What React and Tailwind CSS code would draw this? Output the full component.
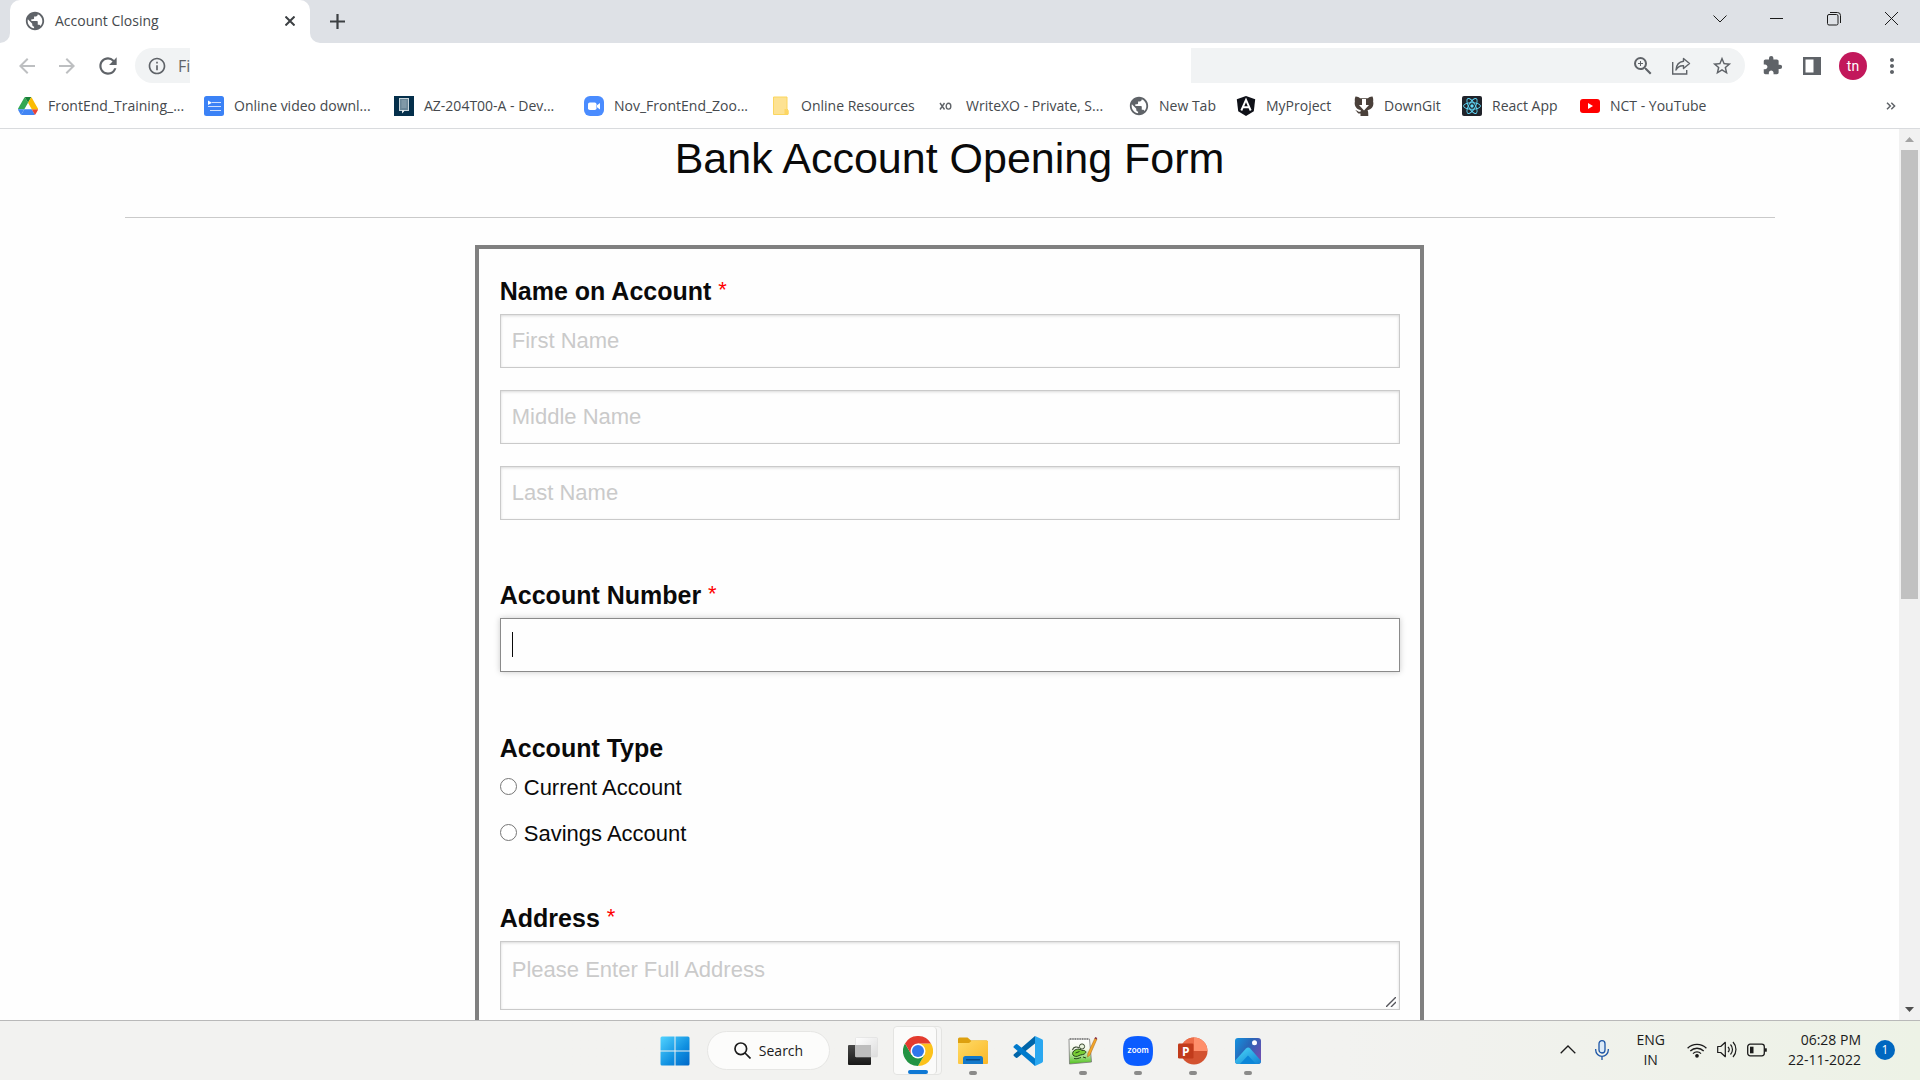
import React from "react";
import {
  MdPublic,
  MdArrowBack,
  MdArrowForward,
  MdRefresh,
  MdOutlineInfo,
  MdZoomIn,
  MdStarBorder,
  MdExtension,
  MdMoreVert,
} from "react-icons/md";

/* ---------- Bookmark icons ---------- */

const DriveIcon = () => (
  <svg width="20" height="18" viewBox="0 0 87 78" aria-hidden="true">
    <path d="M43.7 25L29.9 1.2c-1.3.8-2.5 1.9-3.3 3.300L1.200 48.500A9 9 0 0 0 0 53h27.500z" fill="#34a853" />
    <path d="M43.700 25L57.400 1.200C56.100.4 54.500 0 52.900 0H34.400c-1.600 0-3.200.4-4.500 1.200z" fill="#188038" />
    <path d="M59.800 53H27.500L13.700 76.800c1.400.8 2.900 1.200 4.500 1.200h50.900c1.600 0 3.200-.4 4.500-1.200z" fill="#4285f4" />
    <path d="M6.600 66.900l3.900 6.600c.8 1.400 2 2.500 3.300 3.300L27.500 53H0c0 1.600.4 3.100 1.200 4.500z" fill="#4285f4" />
    <path d="M73.500 76.800c1.300-.8 2.500-1.900 3.300-3.300l9.300-16c.8-1.400 1.200-2.900 1.200-4.500H59.800l5.900 11.500z" fill="#ea4335" />
    <path d="M73.400 26.500l-12.700-22c-.8-1.400-2-2.500-3.300-3.300L43.700 25l16.100 28h27.400c0-1.600-.4-3.100-1.200-4.500z" fill="#fbbc04" />
  </svg>
);

const VideoListIcon = () => (
  <svg width="20" height="20" viewBox="0 0 20 20" aria-hidden="true">
    <rect width="20" height="20" rx="2.5" fill="#3b82f6" />
    <path d="M4 4.500l4 2.300-4 2.300z" fill="#fff" />
    <path d="M8 6.500h9M4 10.500h13M6 14.500h11" stroke="#cfe0fd" strokeWidth="1.2" />
  </svg>
);

const CourseIcon = () => (
  <svg width="20" height="20" viewBox="0 0 20 20" aria-hidden="true">
    <rect width="20" height="20" fill="#042f4b" />
    <rect x="5.5" y="2.5" width="9" height="12" fill="#6b8798" stroke="#c9d5db" strokeWidth="1" />
    <path d="M7.500 5h5M7.500 7h5M7.500 9h5M7.500 11h5" stroke="#a9bac4" strokeWidth=".7" />
    <path d="M8 14v3.500l2-2 .5-1.500z" fill="#e3eaee" />
  </svg>
);

const ZoomCamIcon = () => (
  <svg width="20" height="20" viewBox="0 0 20 20" aria-hidden="true">
    <rect width="20" height="20" rx="6" fill="#4a8cff" />
    <rect x="4" y="6.5" width="8.5" height="7.5" rx="1.8" fill="#fff" />
    <path d="M13 9.200l3-2.200v6.500l-3-2.200z" fill="#fff" />
  </svg>
);

const NoteIcon = () => (
  <svg width="20" height="20" viewBox="0 0 20 20" aria-hidden="true">
    <path d="M2.500 1h13.500v12l1 1v4.500H2.500z" fill="#fde293" stroke="#fbd65f" />
    <path d="M13.500 18v-5h2l2 2v3z" fill="#fdd663" />
  </svg>
);

const XoIcon = () => (
  <svg width="20" height="20" viewBox="0 0 20 20" aria-hidden="true">
    <path d="M4 7l4.500 6.500M8.500 7L4 13.500" stroke="#5f6368" strokeWidth="1.4" />
    <ellipse cx="12.5" cy="10.2" rx="2.3" ry="2.9" fill="none" stroke="#5f6368" strokeWidth="1.4" />
  </svg>
);

const GlobeIcon = () => <MdPublic size={22} className="shrink-0 text-[#5f6368]" aria-hidden="true" />;

const AngularIcon = () => (
  <svg width="20" height="20" viewBox="0 0 20 20" aria-hidden="true">
    <path d="M10 0l9.200 3.300-1.400 12L10 20l-7.800-4.700-1.400-12z" fill="#0f1118" />
    <path d="M5.300 14.500L10 3.800l4.700 10.700M7 11.300h6" fill="none" stroke="#fff" strokeWidth="1.9" />
  </svg>
);

const DownGitIcon = () => (
  <svg width="20" height="20" viewBox="0 0 20 20" aria-hidden="true">
    <path d="M1.500.500C3 .3 5 1.200 6 2.200h8c1-1 3-1.900 4.500-1.700.9 2 .8 4 .6 5 1 3.500-.6 7.800-5.600 8.800.6.800.8 2 .8 5.700H6.500v-2.500c-2.500.300-3.300-1-4-2.300l-1.200-1c1.700-.3 2.500 1.800 5.200 1.600 0-.7.200-1.200.5-1.500C1.600 13.200 0 9 .9 5.500c-.2-1-.3-3 .6-5z" fill="#4a403a" />
    <path d="M8 3h4v6h3l-5 5.500L5 9h3z" fill="#fff" />
  </svg>
);

const ReactIcon = () => (
  <svg width="20" height="20" viewBox="0 0 20 20" aria-hidden="true">
    <rect width="20" height="20" rx="2" fill="#20232a" />
    <g fill="none" stroke="#61dafb" strokeWidth=".9">
      <ellipse cx="10" cy="10" rx="8.5" ry="3.3" />
      <ellipse cx="10" cy="10" rx="8.5" ry="3.3" transform="rotate(60 10 10)" />
      <ellipse cx="10" cy="10" rx="8.5" ry="3.3" transform="rotate(120 10 10)" />
    </g>
    <circle cx="10" cy="10" r="1.7" fill="#61dafb" />
  </svg>
);

const YouTubeIcon = () => (
  <svg width="20" height="20" viewBox="0 0 20 20" aria-hidden="true">
    <rect y="3" width="20" height="14" rx="3" fill="#f00" />
    <path d="M8 7l5 3-5 3z" fill="#fff" />
  </svg>
);

const bookmarks = [
  { label: "FrontEnd_Training_...", icon: DriveIcon, width: "w-[186px]" },
  { label: "Online video downl...", icon: VideoListIcon, width: "w-[190px]" },
  { label: "AZ-204T00-A - Dev...", icon: CourseIcon, width: "w-[190px]" },
  { label: "Nov_FrontEnd_Zoo...", icon: ZoomCamIcon, width: "w-[187px]" },
  { label: "Online Resources", icon: NoteIcon, width: "w-[165px]" },
  { label: "WriteXO - Private, S...", icon: XoIcon, width: "w-[193px]" },
  { label: "New Tab", icon: GlobeIcon, width: "w-[107px]" },
  { label: "MyProject", icon: AngularIcon, width: "w-[118px]" },
  { label: "DownGit", icon: DownGitIcon, width: "w-[108px]" },
  { label: "React App", icon: ReactIcon, width: "w-[118px]" },
  { label: "NCT - YouTube", icon: YouTubeIcon, width: "w-[140px]" },
];

/* ---------- Browser chrome ---------- */

function TabStrip() {
  return (
    <div className="flex h-[43px] shrink-0 items-stretch bg-[#dee1e6]">
      <div className="w-[10px] bg-white">
        <div className="h-full rounded-br-[10px] bg-[#dee1e6]" />
      </div>
      <div className="flex w-[300px] items-center rounded-t-[10px] bg-white pr-[15px] pb-[2px] pl-[14px]">
        <MdPublic size={22} className="text-[#5f6368]" aria-hidden="true" />
        <span className="ml-[9px] flex-1 text-[#45494d]">Account Closing</span>
        <button type="button" aria-label="Close tab" className="text-[#3c4043]">
          <svg width="10" height="10" viewBox="0 0 10 10"><path d="M.5.5l9 9M9.500.5l-9 9" stroke="currentColor" strokeWidth="2" /></svg>
        </button>
      </div>
      <div className="w-[10px] bg-white">
        <div className="h-full rounded-bl-[10px] bg-[#dee1e6]" />
      </div>
      <button type="button" aria-label="New tab" className="ml-[10px] text-[#3c4043]">
        <svg width="15" height="15" viewBox="0 0 15 15"><path d="M7.500 0v15M0 7.500h15" stroke="currentColor" strokeWidth="2.2" /></svg>
      </button>
      <div className="ml-auto flex items-center pb-[6px] text-[#1b1b1b]">
        <button type="button" aria-label="Search tabs" className="flex w-[57px] justify-center">
          <svg width="14" height="8" viewBox="0 0 14 8"><path d="M.5 .5l6.500 6.500 6.500-6.500" fill="none" stroke="currentColor" /></svg>
        </button>
        <button type="button" aria-label="Minimize" className="flex w-[57px] justify-center">
          <svg width="13" height="13" viewBox="0 0 13 13"><path d="M0 6.500h13" stroke="currentColor" /></svg>
        </button>
        <button type="button" aria-label="Restore" className="flex w-[57px] justify-center">
          <svg width="14" height="14" viewBox="0 0 14 14" fill="none" stroke="currentColor">
            <rect x=".5" y="2.5" width="10.5" height="10.5" rx="1.5" />
            <path d="M3 .5h7.500a3 3 0 0 1 3 3V11" />
          </svg>
        </button>
        <button type="button" aria-label="Close" className="flex w-[58px] justify-center">
          <svg width="13" height="13" viewBox="0 0 13 13"><path d="M0 0l13 13M13 0L0 13" stroke="currentColor" /></svg>
        </button>
      </div>
    </div>
  );
}

function Toolbar() {
  return (
    <div className="flex h-[45px] shrink-0 items-center bg-white text-[#5f6368]">
      <button type="button" aria-label="Back" className="ml-[15px] w-10 text-[#bdbfc1]"><MdArrowBack size={24} /></button>
      <button type="button" aria-label="Forward" className="w-10 text-[#bdbfc1]"><MdArrowForward size={24} /></button>
      <button type="button" aria-label="Reload" className="w-10"><MdRefresh size={26} /></button>
      <div className="flex h-[35px] w-[55px] items-center overflow-hidden rounded-l-full bg-[#f1f3f4] pl-3">
        <MdOutlineInfo size={20} className="shrink-0" />
        <span className="ml-[11px] text-base">Fi</span>
      </div>
      <div className="ml-auto flex h-[35px] w-[554px] items-center justify-end rounded-r-full bg-[#f1f3f4] pr-3">
        <button type="button" aria-label="Zoom" className="w-10"><MdZoomIn size={24} /></button>
        <button type="button" aria-label="Share" className="w-10">
          <svg width="20" height="20" viewBox="0 0 20 20" fill="none" stroke="currentColor" strokeWidth="1.4">
            <path d="M1.700 6v12h14v-4" />
            <path d="M12.500 2.500l6 5-6 5V9.800C8.500 9.500 6.500 11 5 14c.3-5 3-8.300 7.500-8.800z" strokeLinejoin="round" />
          </svg>
        </button>
        <button type="button" aria-label="Bookmark this page"><MdStarBorder size={22} /></button>
      </div>
      <button type="button" aria-label="Extensions" className="ml-[17px] w-10"><MdExtension size={21} /></button>
      <button type="button" aria-label="Side panel" className="w-[37px]">
        <svg width="20" height="20" viewBox="0 0 20 20"><path fill="currentColor" fillRule="evenodd" d="M1 1h18v18H1zM3.500 3.500v13h8v-13z" /></svg>
      </button>
      <button type="button" aria-label="Profile" className="size-7 rounded-full bg-[#c2185b] font-['Roboto',sans-serif] text-sm leading-none text-white">tn</button>
      <button type="button" aria-label="Menu" className="mr-4 ml-[13px]"><MdMoreVert size={24} /></button>
    </div>
  );
}

function BookmarksBar() {
  return (
    <nav aria-label="Bookmarks" className="flex h-[41px] shrink-0 items-center border-b border-[#d9dbde] bg-white pr-6 pb-[4px] pl-[18px] text-[#45494d]">
      {bookmarks.map(({ label, icon: Icon, width }) => (
        <a key={label} href="#" className={`flex shrink-0 items-center gap-[10px] whitespace-nowrap ${width}`}>
          <span className="flex w-5 shrink-0 justify-center"><Icon /></span>
          {label}
        </a>
      ))}
      <button type="button" aria-label="More bookmarks" className="ml-auto text-[#5f6368]">
        <svg width="10" height="8" viewBox="0 0 10 8" fill="none" stroke="currentColor" strokeWidth="1.5"><path d="M1 .7L4.300 4 1 7.300M5.300.7L8.600 4 5.300 7.300" /></svg>
      </button>
    </nav>
  );
}

/* ---------- Web page ---------- */

const fieldBox =
  "block w-full border border-[#cacaca] bg-[#fefefe] px-[11px] text-[22px] leading-[34px] shadow-[inset_0_1px_3px_rgba(10,10,10,0.15)] outline-none placeholder:text-[#cacaca]";

const Required = () => <span className="align-text-top text-[22px] leading-[25px] font-normal text-[#ff0000]">*</span>;

const headingStyle = "mb-[5px] block text-[25px] leading-9 font-bold";

function AccountForm() {
  return (
    <form className="mx-auto mt-[27px] w-1/2 border-4 border-[#808080] pt-6 pr-5 pb-10 pl-[21px]">
      <fieldset className="mb-[57px]">
        <legend className={headingStyle}>Name on Account <Required /></legend>
        <div className="flex flex-col gap-[22px]">
          {["First Name", "Middle Name", "Last Name"].map((name) => (
            <input key={name} type="text" aria-label={name} placeholder={name} className={`${fieldBox} h-[54px]`} />
          ))}
        </div>
      </fieldset>

      <div className="mb-[58px]">
        <label htmlFor="account-number" className={headingStyle}>Account Number <Required /></label>
        <div className="relative">
          <input
            id="account-number"
            type="text"
            className="block h-[54px] w-full border border-[#8a8a8a] bg-[#fefefe] px-[11px] text-[22px] caret-transparent shadow-[0_0_6px_#cacaca] outline-none"
          />
          <span className="absolute top-[14px] left-3 h-[25px] w-px bg-[#0a0a0a]" aria-hidden="true" />
        </div>
      </div>

      <fieldset className="mb-[49px]">
        <legend className={headingStyle}>Account Type</legend>
        <div className="flex flex-col items-start gap-3">
          {["Current Account", "Savings Account"].map((type) => (
            <label key={type} className="flex items-center gap-[7px] text-[22px] leading-[34px]">
              <input type="radio" name="account-type" className="mb-1 size-[17px] appearance-none rounded-full border border-[#767676] bg-white checked:border-[5px]" />
              {type}
            </label>
          ))}
        </div>
      </fieldset>

      <div>
        <label htmlFor="address" className={headingStyle}>Address <Required /></label>
        <div className="relative">
          <textarea id="address" placeholder="Please Enter Full Address" className={`${fieldBox} h-[69px] resize-none pt-[11px]`} />
          <svg className="absolute right-1 bottom-[3px] text-[#55555b]" width="10" height="10" viewBox="0 0 10 10" aria-hidden="true">
            <path d="M0 10L10 0M5 10l5-5" stroke="currentColor" strokeWidth="1.4" />
          </svg>
        </div>
      </div>
    </form>
  );
}

function ScrollBar() {
  return (
    <div className="flex w-[21px] shrink-0 flex-col items-center bg-[#f1f1f1]" aria-hidden="true">
      <div className="flex h-[21px] items-center">
        <svg width="9" height="5" viewBox="0 0 9 5"><path d="M0 5L4.500 0 9 5z" fill="#a3a3a3" /></svg>
      </div>
      <div className="w-[17px] basis-[50.4%] bg-[#c1c1c1]" />
      <div className="mt-auto flex h-[21px] items-center">
        <svg width="9" height="5" viewBox="0 0 9 5"><path d="M0 0L4.500 5 9 0z" fill="#505050" /></svg>
      </div>
    </div>
  );
}

/* ---------- Taskbar ---------- */

const WindowsIcon = () => (
  <svg width="30" height="30" viewBox="0 0 30 30">
    <defs>
      <linearGradient id="win" x1="0" y1="0" x2="1" y2="1"><stop offset="0" stopColor="#52d3ff" /><stop offset=".6" stopColor="#0f8fe0" /><stop offset="1" stopColor="#0067c8" /></linearGradient>
    </defs>
    <path d="M2 .5h12.500v14H.5V2A1.500 1.500 0 0 1 2 .5zM15.500.5H28A1.500 1.500 0 0 1 29.500 2v12.500h-14zM.5 15.500h14v14H2A1.500 1.500 0 0 1 .5 28zM15.500 15.500h14V28a1.500 1.500 0 0 1-1.500 1.500H15.500z" fill="url(#win)" />
  </svg>
);

const TaskViewIcon = () => (
  <svg width="30" height="28" viewBox="0 0 30 28">
    <defs>
      <linearGradient id="tvd" x1="0" y1="0" x2="0" y2="1"><stop offset="0" stopColor="#484848" /><stop offset="1" stopColor="#171717" /></linearGradient>
      <linearGradient id="tvl" x1="0" y1="0" x2="1" y2="1"><stop offset="0" stopColor="#fff" /><stop offset="1" stopColor="#dcdcdc" /></linearGradient>
    </defs>
    <rect y="8" width="23" height="20" rx="1" fill="url(#tvd)" />
    <rect x="7.5" y=".5" width="22" height="19.5" rx="1" fill="url(#tvl)" stroke="#d8d8d8" strokeWidth=".5" />
    <path d="M7.500 8H23v12H7.500z" fill="#bdbdbd" />
  </svg>
);

const ChromeIcon = () => (
  <svg width="30" height="30" viewBox="0 0 48 48">
    <path d="M24 12h20.800A24 24 0 0 1 24 48l10.400-18z" fill="#fcc21b" />
    <path d="M34.400 30L24 48A24 24 0 0 1 3.200 12l10.400 18z" fill="#229342" />
    <path d="M13.600 30L3.200 12a24 24 0 0 1 41.600 0H24z" fill="#e33b2e" />
    <circle cx="24" cy="24" r="12" fill="#fff" />
    <circle cx="24" cy="24" r="9.6" fill="#3077ec" />
  </svg>
);

const ExplorerIcon = () => (
  <svg width="30" height="28" viewBox="0 0 30 28">
    <defs>
      <linearGradient id="fold" x1="0" y1="0" x2="1" y2="1"><stop offset="0" stopColor="#ffdb66" /><stop offset="1" stopColor="#fbb728" /></linearGradient>
    </defs>
    <path d="M0 2A1.500 1.500 0 0 1 1.500.5h8L13 3.500h15.500A1.500 1.500 0 0 1 30 5v6H0z" fill="#dda00f" />
    <path d="M0 6h11l3-2.500h14.500A1.500 1.500 0 0 1 30 5v21a1 1 0 0 1-1 1H1a1 1 0 0 1-1-1z" fill="url(#fold)" />
    <path d="M5 27v-5.500A2.500 2.500 0 0 1 7.500 19h15a2.500 2.500 0 0 1 2.500 2.500V27z" fill="#1378ca" />
    <path d="M8.500 22.700h13" stroke="#0a4a86" strokeWidth="1.4" strokeLinecap="round" />
  </svg>
);

const VsCodeIcon = () => (
  <svg width="30" height="30" viewBox="0 0 30 30">
    <path d="M22 7.500L4.300 21.700a1.300 1.300 0 0 1-1.700-.1L.9 20a1.300 1.300 0 0 1 0-1.800L22 0z" fill="#0065a9" />
    <path d="M22 22.500L4.300 8.300a1.300 1.300 0 0 0-1.700.1L.9 10a1.300 1.300 0 0 0 0 1.800L22 30z" fill="#007acc" />
    <path d="M22 0l7 3.300a1.800 1.800 0 0 1 1 1.700v20a1.800 1.800 0 0 1-1 1.700L22 30z" fill="#2aa7f0" />
  </svg>
);

const NotepadIcon = () => (
  <svg width="30" height="28" viewBox="0 0 30 28">
    <defs>
      <linearGradient id="npp" x1="0" y1="0" x2="0" y2="1"><stop offset="0" stopColor="#fff" /><stop offset=".4" stopColor="#f4f8ec" /><stop offset="1" stopColor="#4fc21c" /></linearGradient>
    </defs>
    <path d="M1 2h20.500l2 23L1.500 27z" fill="url(#npp)" stroke="#777" strokeWidth=".8" />
    <path d="M2 2h19" stroke="#777" strokeWidth="1.4" strokeDasharray="1.2 1.2" />
    <path d="M4.500 13c1-3.500 4.500-3.500 6.500-2" fill="none" stroke="#3b4a33" strokeWidth="1.1" />
    <circle cx="14" cy="9.5" r="2.6" fill="#e9f3dc" stroke="#3b4a33" strokeWidth="1" />
    <path d="M5 15c2-3.500 7-3.500 9-1.500 3-.5 4.500 1 3.500 2.500-1.500 2-4.500 1.500-6.500 2.500-2 1.500-5 1-6-.5-.5-1-.5-2 0-3z" fill="#79cf35" stroke="#26431a" strokeWidth="1" />
    <path d="M7.500 16l4-1.500M6 21.500c3 .8 5-.5 7-1M15 20l3 1" fill="none" stroke="#26431a" strokeWidth="1" />
    <path d="M27 1l2 1-7 16-2.500 2 .3-3.500z" fill="#f4a62a" stroke="#a76512" strokeWidth=".5" />
    <path d="M26.500 1.500l.8-1.500 2 1-.7 1.600z" fill="#8e3346" />
  </svg>
);

const ZoomAppIcon = () => (
  <svg width="30" height="30" viewBox="0 0 30 30">
    <path d="M15 0c11.500 0 15 3.500 15 15s-3.500 15-15 15S0 26.500 0 15 3.500 0 15 0z" fill="#0b5cff" />
    <text x="15" y="17" textAnchor="middle" fontFamily="Inter, sans-serif" fontWeight="600" fontSize="8" fill="#fff">zoom</text>
  </svg>
);

const PowerPointIcon = () => (
  <svg width="30" height="28" viewBox="0 0 30 28">
    <circle cx="16" cy="14" r="13.5" fill="#d35230" />
    <path d="M16 .5A13.500 13.500 0 0 1 29.500 14H16z" fill="#ff8f6b" />
    <path d="M16 .5V14H2.500A13.500 13.500 0 0 1 16 .5z" fill="#ed6c47" />
    <rect y="6.5" width="15.5" height="15" rx="1.3" fill="#c13b1b" />
    <text x="7.8" y="18.5" textAnchor="middle" fontFamily="Open Sans, sans-serif" fontWeight="700" fontSize="12" fill="#fff">P</text>
  </svg>
);

const PhotosIcon = () => (
  <svg width="26" height="26" viewBox="0 0 26 26">
    <defs>
      <linearGradient id="pho" x1="0" y1="0" x2="1" y2=".6"><stop offset="0" stopColor="#1593e0" /><stop offset=".5" stopColor="#2866b8" /><stop offset="1" stopColor="#6a4fb0" /></linearGradient>
      <linearGradient id="mtn" x1="0" y1="0" x2="1" y2="1"><stop offset="0" stopColor="#4fdcfa" /><stop offset="1" stopColor="#0a78d0" /></linearGradient>
      <clipPath id="phoclip"><rect width="26" height="26" rx="3" /></clipPath>
    </defs>
    <g clipPath="url(#phoclip)">
      <rect width="26" height="26" fill="url(#pho)" />
      <path d="M-2 25l13-14.500c1.200-1.300 3-1.300 4.200 0L28 25v3H-2z" fill="url(#mtn)" />
      <path d="M13 17.500l9 9.500H4z" fill="#0c86d8" />
    </g>
    <circle cx="19.5" cy="4.8" r="2.5" fill="#fff" />
  </svg>
);

const apps = [
  { label: "File Explorer", icon: ExplorerIcon, running: true },
  { label: "Visual Studio Code", icon: VsCodeIcon, running: false },
  { label: "Notepad++", icon: NotepadIcon, running: true },
  { label: "Zoom", icon: ZoomAppIcon, running: true },
  { label: "PowerPoint", icon: PowerPointIcon, running: true },
  { label: "Photos", icon: PhotosIcon, running: true },
];

function Taskbar() {
  return (
    <footer className="grid h-[60px] shrink-0 grid-cols-[1fr_auto_1fr] items-center border-t border-[#b9b9b9] bg-linear-to-r from-[#f2f2f0] from-70% to-[#edf2e6] text-[#1b1b1b]">
      <div />
      <div className="flex items-center pl-[2px]">
        <button type="button" aria-label="Start" className="flex w-[55px] justify-center"><WindowsIcon /></button>
        <button type="button" className="mx-[5px] flex h-[39px] w-[123px] items-center justify-center gap-2 rounded-full border border-[#e6e6e4] bg-[#fcfcfb]">
          <svg width="17" height="17" viewBox="0 0 17 17" fill="none" stroke="currentColor" strokeWidth="1.7"><circle cx="6.8" cy="6.8" r="5.8" /><path d="M11 11l5.500 5.500" /></svg>
          Search
        </button>
        <button type="button" aria-label="Task view" className="flex w-[55px] justify-center"><TaskViewIcon /></button>
        <button type="button" aria-label="Google Chrome" className="relative mx-[3px] flex h-[49px] w-[49px] items-center justify-center rounded border border-[#e4e4e2] bg-[#f6f6f5]">
          <span className="absolute inset-y-0 left-0 right-1 rounded border-r border-[#dcdcda] bg-[#fbfbfa]" />
          <span className="relative"><ChromeIcon /></span>
          <span className="absolute bottom-0 h-1 w-5 rounded-full bg-[#0f78d4]" />
        </button>
        {apps.map(({ label, icon: Icon, running }) => (
          <button key={label} type="button" aria-label={label} className="relative flex h-[49px] w-[55px] items-center justify-center">
            <Icon />
            {running && <span className="absolute bottom-0 h-1 w-2 rounded-full bg-[#8b8b8a]" />}
          </button>
        ))}
      </div>
      <div className="flex items-center justify-end pr-[25px] pb-[2px]">
        <button type="button" aria-label="Show hidden icons" className="mr-[19px]">
          <svg width="16" height="9" viewBox="0 0 16 9"><path d="M.7 8.300L8 1l7.300 7.300" fill="none" stroke="currentColor" strokeWidth="1.3" /></svg>
        </button>
        <button type="button" aria-label="Microphone" className="mr-[27px]">
          <svg width="14" height="20" viewBox="0 0 14 20" fill="none" stroke="#1d56a6" strokeWidth="1.3"><rect x="4" y=".7" width="6" height="12.3" rx="3" fill="#dcebf8" /><path d="M.7 9v1a6.300 6.300 0 0 0 12.600 0V9M7 16.300V20" /></svg>
        </button>
        <button type="button" className="mr-[22px] text-center leading-5">ENG<br />IN</button>
        <button type="button" aria-label="Network, volume and battery" className="mr-[21px] flex items-center gap-[10px]">
          <svg width="20" height="16" viewBox="0 0 20 16" fill="none" stroke="currentColor" strokeWidth="1.3"><path d="M.6 6.300a13.200 13.200 0 0 1 18.800 0M3.300 9a9.500 9.500 0 0 1 13.400 0M6 11.600a5.700 5.700 0 0 1 8 0" /><circle cx="10" cy="13.8" r="1.2" fill="currentColor" /></svg>
          <svg width="20" height="17" viewBox="0 0 20 17" fill="none" stroke="currentColor" strokeWidth="1.2"><path d="M.7 5.500h3L8.300 1.300v14.400L3.700 11.500h-3z" strokeLinejoin="round" /><path d="M11 5.800a4 4 0 0 1 0 5.400M13.500 3.500a7.300 7.300 0 0 1 0 10M16 1a11 11 0 0 1 0 15" /></svg>
          <svg width="20" height="14" viewBox="0 0 20 14" fill="none" stroke="currentColor" strokeWidth="1.3"><rect x=".7" y="1.2" width="16.6" height="11.6" rx="2.5" /><path d="M18.800 5.300v3.400" strokeWidth="2" /><rect x="3" y="3.7" width="3.5" height="6.6" fill="currentColor" stroke="none" /></svg>
        </button>
        <button type="button" className="mr-[14px] text-right leading-5">06:28 PM<br />22-11-2022</button>
        <button type="button" aria-label="Notifications" className="size-5 rounded-full bg-[#0067c0] text-xs leading-none text-white">1</button>
      </div>
    </footer>
  );
}

export default function App() {
  return (
    <div className="flex h-screen flex-col overflow-hidden font-['Open_Sans',sans-serif] text-sm">
      <TabStrip />
      <Toolbar />
      <BookmarksBar />
      <div className="flex min-h-0 flex-1 bg-[#fefefe]">
        <main className="flex-1 overflow-hidden font-['Liberation_Sans',sans-serif] text-[#0a0a0a]">
          <h1 className="text-center text-[43px] leading-[58px]">Bank Account Opening Form</h1>
          <hr className="mr-[124px] ml-[125px] mt-[30px] border-[#cacaca]" />
          <AccountForm />
        </main>
        <ScrollBar />
      </div>
      <Taskbar />
    </div>
  );
}
